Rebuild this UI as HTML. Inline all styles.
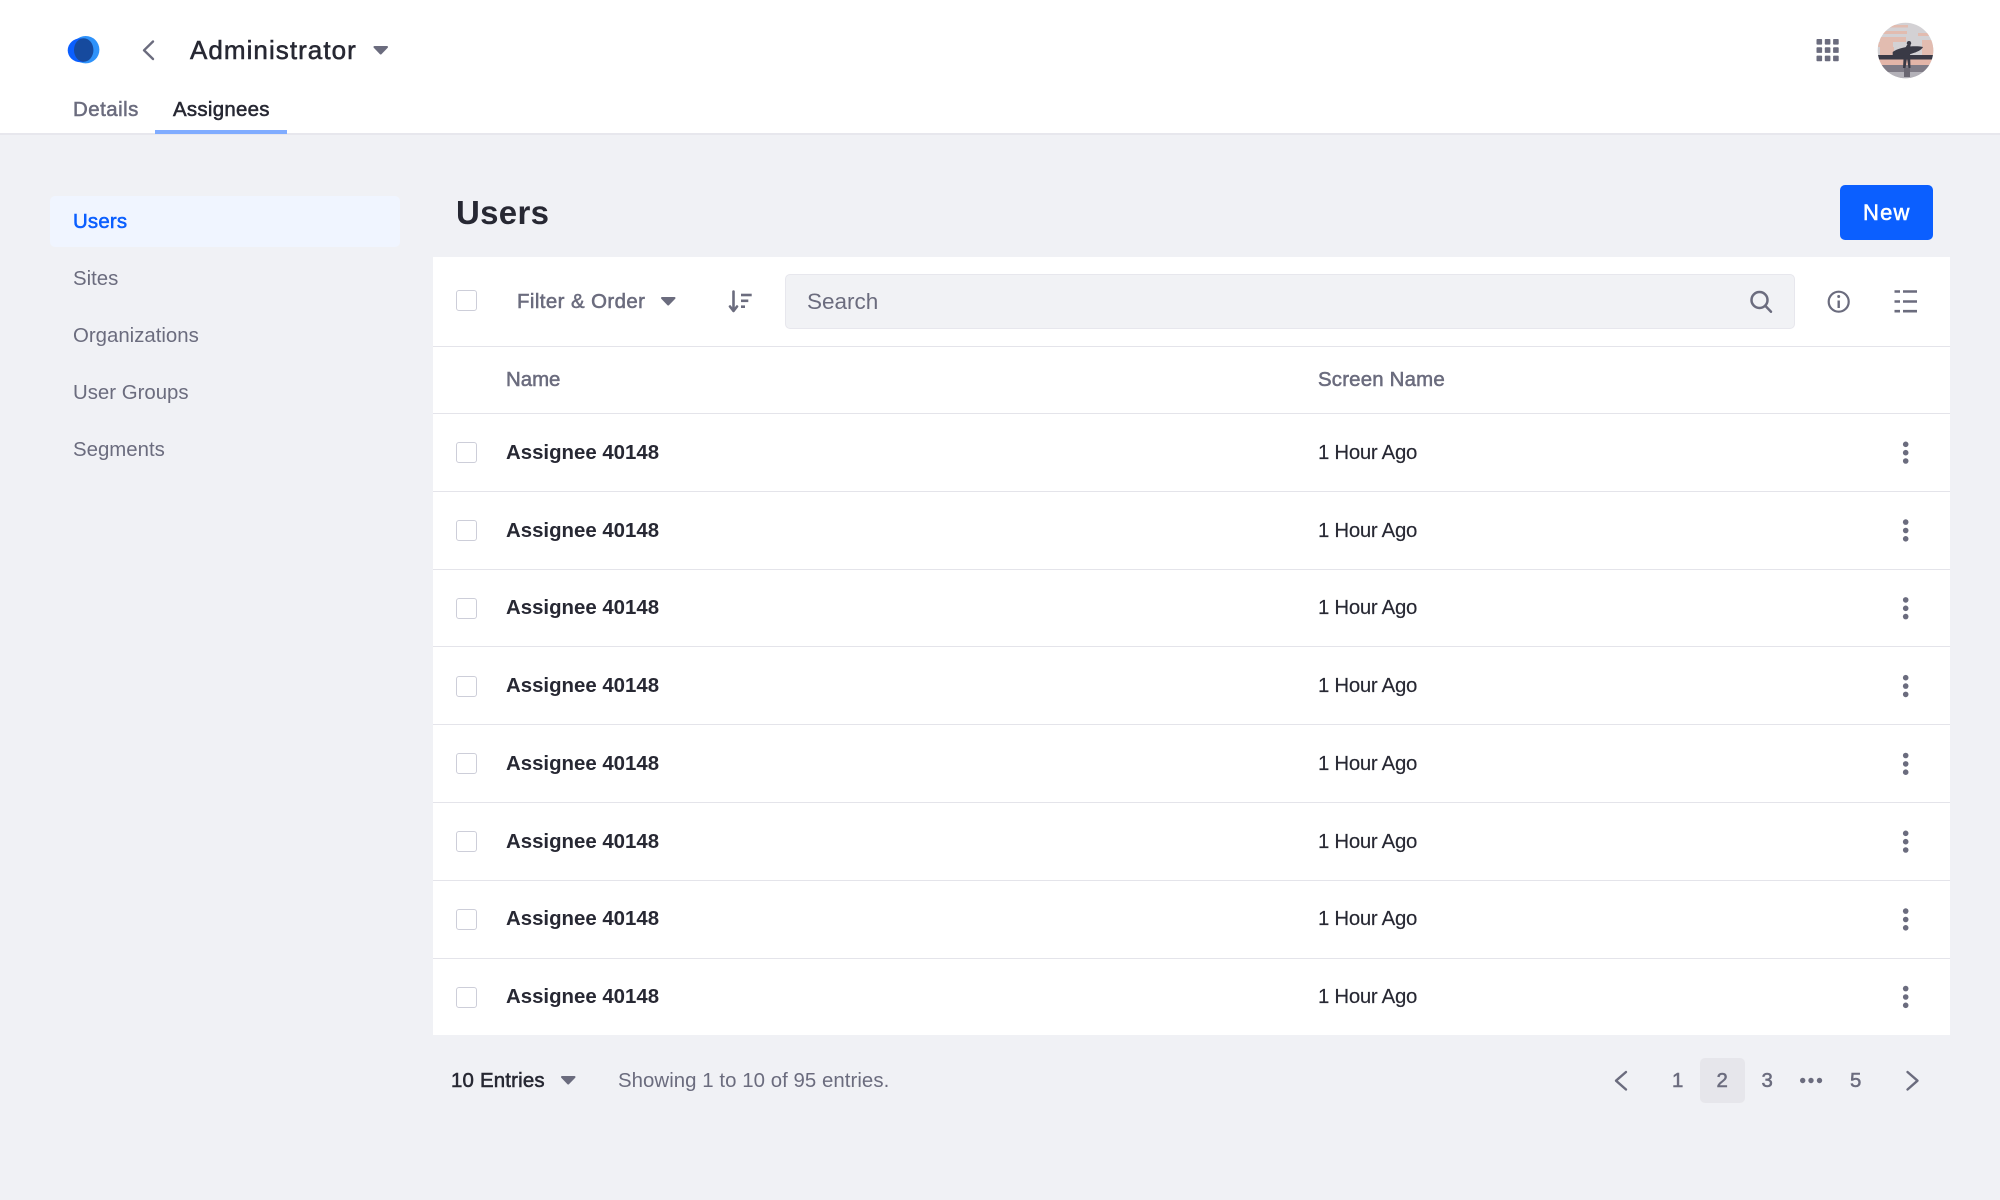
<!DOCTYPE html>
<html lang="en"><head><meta charset="utf-8"><title>Users</title>
<style>
html,body{margin:0;padding:0;background:#f0f1f5}
body{width:2000px;height:1200px;position:relative;overflow:hidden;font-family:"Liberation Sans",Arial,sans-serif;font-size:20.4px;color:#6b6c7e}
.a{position:absolute}
.t{position:absolute;line-height:30px;white-space:nowrap}
.m{-webkit-text-stroke:.55px currentColor}
.d{color:#272833}
.b{font-weight:700}
.r{-webkit-text-stroke:.15px currentColor;letter-spacing:-.3px;left:1318px}
.line{position:absolute;left:433px;width:1517px;height:1px;background:#e4e4ea}
.cb{position:absolute;left:456px;width:19px;height:19px;border:1.5px solid #cdced9;border-radius:3px;background:#fff}
svg{position:absolute;left:0;top:0}
</style></head><body>
<div class="a" style="left:0;top:0;width:2000px;height:133px;background:#fff"></div>
<div class="a" style="left:0;top:133px;width:2000px;height:2px;background:#e7e7ed"></div>
<div class="a" style="left:155px;top:130px;width:132px;height:3.5px;background:#80acff"></div>
<div class="a" style="left:50px;top:196px;width:350px;height:51px;background:#f0f5ff;border-radius:5px"></div>
<div class="a" style="left:433px;top:257px;width:1517px;height:778px;background:#fff"></div>
<div class="a" style="left:785px;top:274px;width:1008px;height:53px;background:#f1f2f5;border:1px solid #e7e7ed;border-radius:5px"></div>
<div class="a" style="left:1840px;top:185px;width:93px;height:55px;background:#0b5fff;border-radius:5px"></div>
<div class="a" style="left:1700px;top:1058px;width:45px;height:45px;background:#e6e6eb;border-radius:5px"></div>

<div class="line" style="top:346px"></div>
<div class="line" style="top:413px"></div>
<div class="line" style="top:491px"></div>
<div class="line" style="top:569px"></div>
<div class="line" style="top:646px"></div>
<div class="line" style="top:724px"></div>
<div class="line" style="top:802px"></div>
<div class="line" style="top:880px"></div>
<div class="line" style="top:958px"></div>

<span class="t d m" style="left:190px;top:35px;font-size:26px;letter-spacing:1.05px">Administrator</span>
<span class="t m" style="left:73px;top:95px;letter-spacing:.5px">Details</span>
<span class="t d m" style="left:173px;top:95px;letter-spacing:.3px">Assignees</span>

<span class="t m" style="left:73px;top:207px;color:#0b5fff;letter-spacing:.2px">Users</span>
<span class="t" style="left:73px;top:264px">Sites</span>
<span class="t" style="left:73px;top:321px">Organizations</span>
<span class="t" style="left:73px;top:378px">User Groups</span>
<span class="t" style="left:73px;top:435px">Segments</span>

<span class="t d b" style="left:456px;top:198px;font-size:33px;letter-spacing:.3px">Users</span>
<span class="t m" style="left:1863px;top:198px;font-size:22px;color:#fff;letter-spacing:1.2px">New</span>

<span class="t m" style="left:517px;top:287px;letter-spacing:.43px">Filter &amp; Order</span>
<span class="t" style="left:807px;top:287px;font-size:22.5px">Search</span>
<span class="t m" style="left:506px;top:365px">Name</span>
<span class="t m" style="left:1318px;top:365px;letter-spacing:.2px">Screen Name</span>

<div class="cb" style="top:290px"></div>
<div class="cb" style="top:442px"></div>
<div class="cb" style="top:520px"></div>
<div class="cb" style="top:597.5px"></div>
<div class="cb" style="top:675.5px"></div>
<div class="cb" style="top:753px"></div>
<div class="cb" style="top:831px"></div>
<div class="cb" style="top:909px"></div>
<div class="cb" style="top:986.5px"></div>

<span class="t d b" style="left:506px;top:438px">Assignee 40148</span><span class="t d r" style="top:438px">1 Hour Ago</span>
<span class="t d b" style="left:506px;top:516px">Assignee 40148</span><span class="t d r" style="top:516px">1 Hour Ago</span>
<span class="t d b" style="left:506px;top:593px">Assignee 40148</span><span class="t d r" style="top:593px">1 Hour Ago</span>
<span class="t d b" style="left:506px;top:671px">Assignee 40148</span><span class="t d r" style="top:671px">1 Hour Ago</span>
<span class="t d b" style="left:506px;top:749px">Assignee 40148</span><span class="t d r" style="top:749px">1 Hour Ago</span>
<span class="t d b" style="left:506px;top:827px">Assignee 40148</span><span class="t d r" style="top:827px">1 Hour Ago</span>
<span class="t d b" style="left:506px;top:904px">Assignee 40148</span><span class="t d r" style="top:904px">1 Hour Ago</span>
<span class="t d b" style="left:506px;top:982px">Assignee 40148</span><span class="t d r" style="top:982px">1 Hour Ago</span>

<span class="t d m" style="left:451px;top:1066px;letter-spacing:.2px">10 Entries</span>
<span class="t" style="left:618px;top:1066px;letter-spacing:.05px">Showing 1 to 10 of 95 entries.</span>
<span class="t m" style="left:1672px;top:1066px">1</span>
<span class="t m" style="left:1716.5px;top:1066px">2</span>
<span class="t m" style="left:1761.5px;top:1066px">3</span>
<span class="t m" style="left:1850px;top:1066px">5</span>

<svg width="2000" height="1200" viewBox="0 0 2000 1200" xmlns="http://www.w3.org/2000/svg">
<defs><clipPath id="av"><circle cx="1905.5" cy="50.5" r="27.8"/></clipPath></defs>
<!-- logo -->
<circle cx="85.7" cy="49.7" r="13.7" fill="#2e92fa"/>
<ellipse cx="80.5" cy="50.3" rx="12.8" ry="12" fill="#0b5fff"/>
<ellipse cx="83.7" cy="50" rx="9.7" ry="11.8" fill="#164a9e"/>
<!-- chevrons -->
<g fill="none" stroke="#6b6c7e" stroke-width="2.4" stroke-linecap="round" stroke-linejoin="round">
<path d="M153 41.5L144 50.3L153 59"/>
<path d="M1626 1072L1616 1080.7L1626 1089.5"/>
<path d="M1907.5 1072L1917.5 1080.7L1907.5 1089.5"/>
</g>
<!-- carets -->
<g fill="#6b6c7e" stroke="#6b6c7e" stroke-width="2" stroke-linejoin="round">
<path d="M374.5 47H387L380.7 53.5Z"/>
<path d="M662 298H674.5L668.2 304.5Z"/>
<path d="M562 1077H574.5L568.2 1083.5Z"/>
</g>
<!-- sort -->
<g fill="none" stroke="#6b6c7e" stroke-width="2.6" stroke-linecap="round" stroke-linejoin="round">
<path d="M733.5 291.5V310.5"/><path d="M730 306.5L733.5 311L737 306.5"/>
</g>
<g stroke="#6b6c7e" stroke-width="2.6">
<path d="M741 295H751.7"/><path d="M741 300.8H748.3"/><path d="M741 306.7H745"/>
</g>
<!-- search -->
<g fill="none" stroke="#6b6c7e" stroke-width="2.5" stroke-linecap="round">
<circle cx="1759.5" cy="300" r="8"/><path d="M1765.5 306L1771 311.7"/>
</g>
<!-- info -->
<circle cx="1838.7" cy="301.7" r="10" fill="none" stroke="#6b6c7e" stroke-width="2.2"/>
<circle cx="1838.7" cy="296.5" r="1.5" fill="#6b6c7e"/>
<path d="M1838.7 300.5V308" stroke="#6b6c7e" stroke-width="2.4"/>
<!-- list -->
<g stroke="#6b6c7e" stroke-width="2.6">
<path d="M1894.5 291.5H1900M1903 291.5H1917"/>
<path d="M1894.5 301.5H1900M1903 301.5H1917"/>
<path d="M1894.5 311.2H1900M1903 311.2H1917"/>
</g>
<!-- grid -->
<g fill="#6b6c7e">
<rect x="1816.5" y="39" width="5.6" height="5.6" rx=".8"/><rect x="1824.8" y="39" width="5.6" height="5.6" rx=".8"/><rect x="1833.1" y="39" width="5.6" height="5.6" rx=".8"/>
<rect x="1816.5" y="47.3" width="5.6" height="5.6" rx=".8"/><rect x="1824.8" y="47.3" width="5.6" height="5.6" rx=".8"/><rect x="1833.1" y="47.3" width="5.6" height="5.6" rx=".8"/>
<rect x="1816.5" y="55.6" width="5.6" height="5.6" rx=".8"/><rect x="1824.8" y="55.6" width="5.6" height="5.6" rx=".8"/><rect x="1833.1" y="55.6" width="5.6" height="5.6" rx=".8"/>
</g>
<!-- avatar -->
<g clip-path="url(#av)">
<rect x="1877" y="22" width="58" height="58" fill="#d3d1d4"/>
<path d="M1888 25h20v2.5h-20zM1877 31h30v3h-30zM1880 37h26v5h-26zM1918 33h17v3h-17zM1877 42h16v5h-16zM1880 47h14v8h-14zM1922 40h12v15h-12z" fill="#e2bcb0"/>
<rect x="1877" y="55" width="58" height="4.5" fill="#3a3a46"/>
<rect x="1877" y="59.5" width="58" height="5.5" fill="#e3b5a8"/>
<rect x="1877" y="65" width="58" height="7" fill="#7f7b86"/>
<rect x="1877" y="72" width="58" height="8" fill="#b3b1b8"/>
<path d="M1892.7 52C1898 47.5 1913 45 1923 47C1921 52 1906 56.5 1892.7 55.5Z" fill="#3a3a46"/>
<circle cx="1909" cy="43.2" r="2.2" fill="#3a3a46"/>
<path d="M1907 45L1904 50L1903 68H1905.5L1907 58L1908.5 68H1910.5L1910 50L1910.5 45Z" fill="#3a3a46"/>
<path d="M1904 68h6v9h-6z" fill="#6a6772"/>
</g>
<!-- kebabs -->
<g fill="#6b6c7e">
<circle cx="1905.7" cy="444.3" r="2.8"/><circle cx="1905.7" cy="452.7" r="2.8"/><circle cx="1905.7" cy="461" r="2.8"/>
<circle cx="1905.7" cy="522.1" r="2.8"/><circle cx="1905.7" cy="530.5" r="2.8"/><circle cx="1905.7" cy="538.8" r="2.8"/>
<circle cx="1905.7" cy="599.9" r="2.8"/><circle cx="1905.7" cy="608.3" r="2.8"/><circle cx="1905.7" cy="616.6" r="2.8"/>
<circle cx="1905.7" cy="677.7" r="2.8"/><circle cx="1905.7" cy="686.1" r="2.8"/><circle cx="1905.7" cy="694.4" r="2.8"/>
<circle cx="1905.7" cy="755.5" r="2.8"/><circle cx="1905.7" cy="763.9" r="2.8"/><circle cx="1905.7" cy="772.2" r="2.8"/>
<circle cx="1905.7" cy="833.3" r="2.8"/><circle cx="1905.7" cy="841.7" r="2.8"/><circle cx="1905.7" cy="850" r="2.8"/>
<circle cx="1905.7" cy="911.1" r="2.8"/><circle cx="1905.7" cy="919.5" r="2.8"/><circle cx="1905.7" cy="927.8" r="2.8"/>
<circle cx="1905.7" cy="988.6" r="2.8"/><circle cx="1905.7" cy="997" r="2.8"/><circle cx="1905.7" cy="1005.3" r="2.8"/>
<circle cx="1802.7" cy="1080.5" r="2.7"/><circle cx="1811" cy="1080.5" r="2.7"/><circle cx="1819.5" cy="1080.5" r="2.7"/>
</g>
</svg>
</body></html>
